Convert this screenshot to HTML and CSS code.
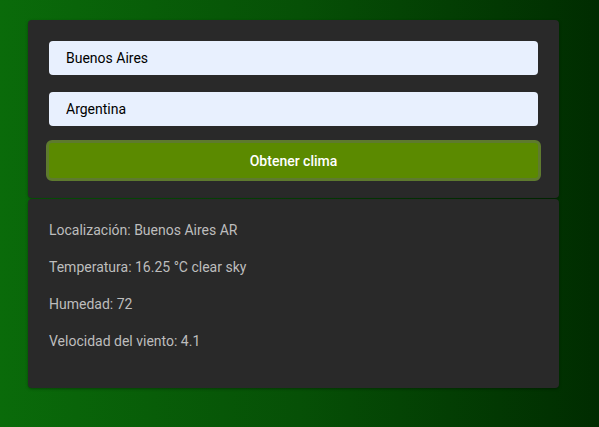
FILE: index.html
```html
<!DOCTYPE html>
<html lang="es">
<head>
<meta charset="utf-8">
<link rel="stylesheet" href="styles.css">
</head>
<body>
<main class="wrap">
  <form class="card form-card">
    <input class="field" type="text" value="Buenos Aires">
    <input class="field" type="text" value="Argentina">
    <button class="btn" type="button">Obtener clima</button>
  </form>
  <section class="card info-card">
    <p>Localización: Buenos Aires AR</p>
    <p>Temperatura: 16.25 °C clear sky</p>
    <p>Humedad: 72</p>
    <p>Velocidad del viento: 4.1</p>
  </section>
</main>
</body>
</html>
```
FILE: styles.css
```css
html, body {
  margin: 0;
  height: 100%;
}
body {
  background: linear-gradient(to right, #0a6b0a 0%, #065006 50%, #002c00 100%);
  font-family: Roboto, "Liberation Sans", sans-serif;
  font-size: 14px;
}
.wrap {
  width: 531px;
  padding: 20px 0 0 28px;
  display: flex;
  flex-direction: column;
  gap: 1px;
}
.card {
  background: #292929;
  border-radius: 4px;
  box-shadow: 0 1px 3px rgba(0, 0, 0, 0.35);
}
.form-card {
  display: flex;
  flex-direction: column;
  padding: 21px 21px 17px 21px;
  margin: 0;
}
.field {
  height: 34px;
  box-sizing: border-box;
  border: none;
  border-radius: 4px;
  background: #e8f0fe;
  color: #000;
  font-family: Roboto, "Liberation Sans", sans-serif;
  font-size: 14px;
  padding: 0 17px;
  margin-bottom: 17px;
  outline: none;
}
.btn {
  height: 41px;
  margin: -3px -3px 0 -3px;
  box-sizing: border-box;
  border: 3px solid #5e7a2e;
  border-radius: 6px;
  background: #5b8a00;
  color: #fff;
  font-family: Roboto, "Liberation Sans", sans-serif;
  font-size: 14px;
  font-weight: 500;
}
.info-card {
  height: 189px;
  box-sizing: border-box;
  padding: 21px 21px 0 21px;
  display: flex;
  flex-direction: column;
  gap: 16px;
}
.info-card p {
  margin: 0;
  height: 21px;
  line-height: 21px;
  color: #bdbdbd;
}
```
